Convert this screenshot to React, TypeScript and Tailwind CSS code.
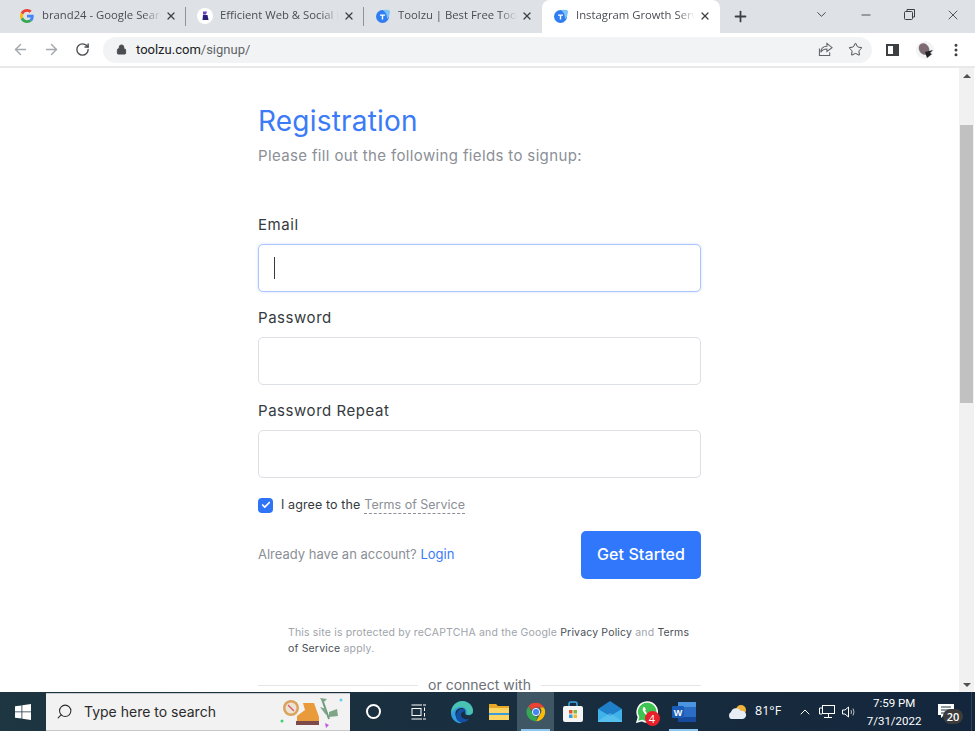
import React from 'react';
import { ArrowLeft, ArrowRight, RotateCw, Lock, Star, X, Plus, ChevronDown, Minus, MoreVertical, Search, ChevronUp, Check } from 'lucide-react';

const ToolzuIcon = () => (
  <svg width="16" height="16" viewBox="0 0 16 16" className="shrink-0">
    <circle cx="7.5" cy="8.5" r="6.5" fill="#2f7df0" />
    <path d="M8 2 Q14 1 15 3 Q15 8 12 11 Q12 5 8 2Z" fill="#7cc4f8" />
    <path d="M5 6.5H10V7.8H8.2V11.5H6.8V7.8H5Z" fill="#fff" />
  </svg>
);

const GoogleIcon = () => (
  <svg width="14" height="14" viewBox="0 0 48 48" className="shrink-0">
    <path fill="#EA4335" d="M24 9.5c3.5 0 6.700 1.200 9.200 3.600l6.900-6.900C35.900 2.400 30.500 0 24 0 14.600 0 6.500 5.400 2.600 13.200l8 6.200C12.500 13.600 17.800 9.500 24 9.500z" />
    <path fill="#4285F4" d="M47 24.500c0-1.600-.1-3.100-.4-4.500H24v9h12.900c-.6 3-2.200 5.500-4.700 7.200l7.700 6c4.500-4.200 7.100-10.300 7.100-17.700z" />
    <path fill="#FBBC05" d="M10.600 28.600c-.5-1.400-.8-3-.8-4.600s.3-3.200.8-4.600l-8-6.200C.9 16.500 0 20.100 0 24s.9 7.500 2.600 10.800l8-6.200z" />
    <path fill="#34A853" d="M24 48c6.500 0 11.900-2.100 15.900-5.800l-7.700-6c-2.200 1.500-5 2.300-8.200 2.300-6.200 0-11.500-4.100-13.400-9.900l-8 6.200C6.500 42.600 14.600 48 24 48z" />
  </svg>
);

const SocialIcon = () => (
  <div className="flex h-[16px] w-[16px] shrink-0 items-center justify-center rounded-full bg-white">
    <svg width="10" height="10" viewBox="0 0 10 10">
      <path d="M3 0.500H7L6 3.500H3Z" fill="#6d3fc4" />
      <path d="M3 4H7.500L8.500 9H2.500Z" fill="#2b1f7a" />
    </svg>
  </div>
);

const Tab = ({ icon, title, active, divider }: { icon: React.ReactNode; title: string; active?: boolean; divider?: boolean }) => (
  <div className={`relative flex h-[33px] w-[178px] shrink-0 items-center pr-[9px] pb-[2px] pl-[11px] ${active ? 'rounded-t-lg bg-white' : ''}`}>
    <div className="flex w-[16px] shrink-0 justify-center">{icon}</div>
    <span className="ml-[7px] min-w-0 flex-1 overflow-hidden text-[11.3px] whitespace-nowrap text-[#4a4d52] [mask-image:linear-gradient(to_right,black_85%,transparent)]">
      {title}
    </span>
    <X size={12} strokeWidth={2.5} className="ml-[4px] shrink-0 text-[#3c4043]" />
    {divider && <div className="absolute top-[7px] right-0 h-[19px] w-px bg-[#8f9398]" />}
  </div>
);

const BrowserChrome = () => (
  <div className="shrink-0">
    <div className="flex h-[33px] items-center bg-[#dee1e6] pl-[8px]">
      <Tab icon={<GoogleIcon />} title="brand24 - Google Search" divider />
      <Tab icon={<SocialIcon />} title="Efficient Web & Social Listening" divider />
      <Tab icon={<ToolzuIcon />} title="Toolzu | Best Free Tools" />
      <Tab icon={<ToolzuIcon />} title="Instagram Growth Services" active />
      <Plus size={17} strokeWidth={2.5} className="ml-[12px] text-[#3c4043]" />
      <div className="ml-auto flex items-center pb-[4px] text-[#3c4043]">
        <ChevronDown size={15} strokeWidth={1.5} />
        <Minus size={14} strokeWidth={1.5} className="ml-[30px]" />
        <svg width="11" height="11" viewBox="0 0 11 11" fill="none" stroke="currentColor" className="ml-[31px]">
          <rect x="0.500" y="2.500" width="8" height="8" rx="1" fill="#dee1e6" />
          <path d="M3 2.500V0.500H10.500V8H8.500" />
        </svg>
        <X size={16} strokeWidth={1.3} className="mr-[14px] ml-[30px]" />
      </div>
    </div>
    <div className="flex h-[35px] items-center border-b-2 border-[#e8e9eb] bg-white pl-[12px]">
      <ArrowLeft size={17} className="text-[#a4a7ab]" />
      <ArrowRight size={17} className="ml-[14px] text-[#a4a7ab]" />
      <RotateCw size={15} strokeWidth={2.2} className="ml-[15px] text-[#4a4d52]" />
      <div className="ml-[13px] flex h-[26px] w-[769px] shrink-0 items-center rounded-full bg-[#f1f3f4] pl-[13px]">
        <Lock size={11} fill="#4a4d52" className="text-[#4a4d52]" />
        <span className="ml-[9px] font-['Roboto',sans-serif] text-[13px] text-[#202124]">
          toolzu.com<span className="text-[#5f6368]">/signup/</span>
        </span>
        <svg width="15" height="15" viewBox="0 0 16 16" fill="none" stroke="#5f6368" strokeWidth="1.100" className="mr-[15px] ml-auto">
          <path d="M9.500 1.500L15 6L9.500 10V7.500C6 7.500 4 9 3 11C3 7 5.500 4.500 9.500 4.500Z" />
          <path d="M1.500 7V14.500H12.500V11" />
        </svg>
        <Star size={15} strokeWidth={1.6} className="mr-[9px] text-[#4a4d52]" />
      </div>
      <div className="ml-[14px] flex h-[12px] w-[13px] shrink-0 justify-end border-2 border-[#3c4043]">
        <div className="h-full w-[4px] bg-[#3c4043]" />
      </div>
      <svg width="20" height="20" viewBox="0 0 20 20" className="ml-[17px] shrink-0">
        <circle cx="9" cy="10" r="9" fill="#f1f3f4" />
        <ellipse cx="8" cy="9" rx="5" ry="6" fill="#7d6a72" transform="rotate(-30 8 9)" />
        <path d="M9 12L17 10L14 13L16 14L11 18Z" fill="#202124" />
      </svg>
      <MoreVertical size={16} strokeWidth={2.5} className="ml-[12px] shrink-0 text-[#3c4043]" />
    </div>
  </div>
);

const Field = ({ label, focused }: { label: string; focused?: boolean }) => (
  <div>
    <label className="block text-[15px] leading-[22px] tracking-[0.55px] text-[#343a40]">{label}</label>
    <div className={`mt-[8px] flex h-[48px] items-center rounded-[5px] border bg-white pl-[15px] ${focused ? 'border-[#a9c5fb] shadow-[0_0_3px_rgba(60,120,250,0.25)]' : 'border-[#dcdfe3]'}`}>
      {focused && <div className="h-[22px] w-px bg-[#343a40]" />}
    </div>
  </div>
);

const SignupForm = () => (
  <div className="mx-auto w-[443px] pt-[35px] font-['Inter',sans-serif]">
    <h1 className="text-[28px] leading-[36px] tracking-[0.2px] text-[#3b7bf8]">Registration</h1>
    <p className="mt-[5px] text-[15px] leading-[24px] tracking-[0.36px] text-[#8b8f96]">Please fill out the following fields to signup:</p>

    <div className="mt-[46px] flex flex-col gap-[15px]">
      <Field label="Email" focused />
      <Field label="Password" />
      <Field label="Password Repeat" />
    </div>

    <div className="mt-[18px] flex items-center">
      <div className="flex h-[15px] w-[15px] items-center justify-center rounded-[4px] bg-[#2f74f6]">
        <Check size={10} strokeWidth={4} className="text-white" />
      </div>
      <span className="ml-[8px] text-[12.5px] leading-[18px] tracking-[0.1px] text-[#343a40]">I agree to the</span>
      <span className="ml-[4px] border-b border-dashed border-[#8b8f96] text-[12.5px] leading-[16px] text-[#8b8f96]">Terms of Service</span>
    </div>

    <div className="mt-[17px] flex items-center justify-between">
      <p className="text-[13px] text-[#8b8f96]">
        Already have an account? <span className="text-[#3b7bf8]">Login</span>
      </p>
      <button className="h-[48px] w-[120px] rounded-[5px] bg-[#3077fb] pb-[2px] text-[16px] font-medium tracking-[0.1px] text-white">Get Started</button>
    </div>

    <p className="mt-[46px] pl-[30px] text-[10.5px] leading-[16px] tracking-[0.17px] text-[#a0a4aa]">
      This site is protected by reCAPTCHA and the Google <span className="text-[#4a4f57]">Privacy Policy</span> and <span className="text-[#4a4f57]">Terms<br />of Service</span> apply.
    </p>

    <div className="mt-[20px] flex items-center gap-[10px]">
      <div className="h-px flex-1 bg-[#e2e4e7]" />
      <span className="text-[14px] leading-[16px] text-[#6c7077]">or connect with</span>
      <div className="h-px flex-1 bg-[#e2e4e7]" />
    </div>
  </div>
);

const Scrollbar = () => (
  <div className="mr-px flex w-[15px] shrink-0 flex-col items-center bg-[#f1f1f1]">
    <div className="flex h-[15px] items-center justify-center">
      <div className="h-0 w-0 border-x-[4px] border-b-[4px] border-x-transparent border-b-[#505050]" />
    </div>
    <div className="mt-[42px] h-[278px] w-[13px] bg-[#c1c1c1]" />
    <div className="mt-auto flex h-[15px] items-center justify-center">
      <div className="h-0 w-0 border-x-[4px] border-t-[4px] border-x-transparent border-t-[#505050]" />
    </div>
  </div>
);

const TaskIcon = ({ children, active, running }: { children: React.ReactNode; active?: boolean; running?: boolean }) => (
  <div className={`relative flex h-[39px] w-[37px] shrink-0 items-center justify-center ${active ? 'bg-[#3f5664]' : ''}`}>
    {children}
    {running && <div className="absolute right-[4px] bottom-0 left-[4px] h-[2px] bg-[#8ec5ee]" />}
  </div>
);

const Taskbar = () => (
  <div className="flex h-[39px] shrink-0 items-center bg-gradient-to-r from-[#1e3641] to-[#14263c] font-['Open_Sans',sans-serif] text-white">
    <div className="flex w-[46px] shrink-0 justify-center">
      <svg width="16" height="16" viewBox="0 0 16 16" fill="#fff">
        <path d="M0 2.300L6.500 1.400V7.500H0ZM7.300 1.300L16 0V7.500H7.300ZM0 8.300H6.500V14.600L0 13.700ZM7.300 8.300H16V16L7.300 14.700Z" />
      </svg>
    </div>
    <div className="flex h-[38px] w-[304px] shrink-0 items-center border-y border-[#c9c9c9] bg-[#f2f2f2] pl-[10px] text-[#2b2b2b]">
      <Search size={17} strokeWidth={1.5} className="-scale-x-100" />
      <span className="ml-[11px] font-['Inter',sans-serif] text-[14px]">Type here to search</span>
      <svg width="66" height="34" viewBox="0 0 66 34" className="mr-[5px] ml-auto">
        <circle cx="12" cy="13" r="8" fill="#d9a35b" />
        <circle cx="12" cy="13" r="5.500" fill="#ece3d3" />
        <path d="M9 10L15 16" stroke="#d8607a" strokeWidth="1.500" />
        <circle cx="3" cy="26" r="1.500" fill="#3ecf6f" />
        <path d="M35 8H24L26 15L18 21V29H40V22Z" fill="#e99a3a" />
        <path d="M17 26H40V30H17Z" fill="#7d4a4a" />
        <path d="M43 4L50 24" stroke="#6f9b7a" strokeWidth="2" fill="none" />
        <path d="M44 8L41 3L48 4ZM47 14L41 12L47 20ZM50 17L58 14L59 21L50 22Z" fill="#7fa588" />
        <path d="M46 28L50 30L47 33Z" fill="#c05ce0" />
        <circle cx="62" cy="5" r="1.500" fill="#5fd0f0" />
      </svg>
    </div>
    <div className="flex w-[46px] shrink-0 justify-center">
      <div className="h-[15px] w-[15px] rounded-full border-[2.5px] border-white" />
    </div>
    <div className="flex w-[46px] shrink-0 justify-center">
      <svg width="16" height="16" viewBox="0 0 16 16" fill="none" stroke="#fff">
        <path d="M0.500 1H11M0.500 15H11M12 1H15M13.500 3.500V7M13.500 9V12.500M12 15H15" />
        <rect x="1" y="4.500" width="9" height="7" />
      </svg>
    </div>
    <div className="flex shrink-0 items-center pl-[1px]">
      <TaskIcon>
        <svg width="24" height="24" viewBox="0 0 24 24">
          <path d="M1 13C1 5 7 1 12.500 1C19 1 23.500 6 23 12C23 14.500 20 15.500 17 15C14 14.500 16 12 15 10C13.500 7 8 7.500 6 11C4 15 7 21 12 23C6 24 1 19 1 13Z" fill="#2f9fe0" />
          <path d="M7 20C5 15 7 10 11 9C14 8.500 15 10 15.500 11C14 11 11 12 11 15C11 18 15 20 19 19C16 23 10 23.500 7 20Z" fill="#1450a8" />
          <path d="M12 1C18 1 23.500 6 23 12C22 14.500 19 15 17 14.500C18 10 15 6 9 7C5 8 2 11 1 14C1 6 7 1 12 1Z" fill="#5edb8f" opacity="0.6" />
        </svg>
      </TaskIcon>
      <TaskIcon>
        <svg width="22" height="20" viewBox="0 0 22 20">
          <path d="M1 2H8L10 4H21V8H1Z" fill="#e8a825" />
          <path d="M1 6H21V18H1Z" fill="#fcd462" />
          <path d="M1 11H21V13H1Z" fill="#3a9bdc" />
        </svg>
      </TaskIcon>
      <TaskIcon active running>
        <svg width="22" height="22" viewBox="0 0 48 48">
          <path fill="#EA4335" d="M24 4a20 20 0 0 1 17.300 10H24a10 10 0 0 0-9.500 6.900L7.700 11.500A20 20 0 0 1 24 4z" />
          <path fill="#FBBC05" d="M41.300 14A20 20 0 0 1 24 44l8.700-15a10 10 0 0 0-.5-15z" />
          <path fill="#34A853" d="M24 44A20 20 0 0 1 7.700 11.500L15 24a10 10 0 0 0 12 9.500z" />
          <circle cx="24" cy="24" r="8" fill="#4285F4" stroke="#fff" strokeWidth="2" />
        </svg>
      </TaskIcon>
      <TaskIcon>
        <svg width="22" height="22" viewBox="0 0 22 22">
          <path d="M7 6V3Q7 1 9 1H13Q15 1 15 3V6" fill="none" stroke="#3aa6e8" strokeWidth="1.500" />
          <rect x="1" y="5" width="20" height="16" rx="2" fill="#f4f4f4" />
          <rect x="7" y="9" width="3.500" height="3.500" fill="#e8552d" />
          <rect x="11.500" y="9" width="3.500" height="3.500" fill="#7fba3a" />
          <rect x="7" y="13.500" width="3.500" height="3.500" fill="#2f9fe0" />
          <rect x="11.500" y="13.500" width="3.500" height="3.500" fill="#f7b92d" />
        </svg>
      </TaskIcon>
      <TaskIcon>
        <svg width="24" height="22" viewBox="0 0 24 22">
          <path d="M12 0L24 8V20H0V8Z" fill="#1f7fc8" />
          <path d="M0 8L12 15L24 8V21H0Z" fill="#3fb2ea" />
          <path d="M0 20L12 12L24 20V21H0Z" fill="#6ccdf2" opacity="0.5" />
        </svg>
      </TaskIcon>
      <TaskIcon>
        <div className="relative">
          <svg width="22" height="22" viewBox="0 0 22 22">
            <path d="M11 1A10 10 0 0 0 2.500 16L1 21L6 19.500A10 10 0 1 0 11 1Z" fill="#3fc351" stroke="#fff" strokeWidth="1.500" />
            <path d="M7.500 6Q6 7.500 7 10Q9 14 13.500 15.500Q16 15.500 16 13.500L13.500 12L12.500 13Q10 12 9 9.500L10 8.500L8.500 6Z" fill="#fff" />
          </svg>
          <div className="absolute -right-[2px] -bottom-[3px] flex h-[15px] w-[15px] items-center justify-center rounded-full bg-[#e8202a] text-[11px] leading-none text-white">4</div>
        </div>
      </TaskIcon>
      <TaskIcon running>
        <svg width="24" height="22" viewBox="0 0 24 22">
          <rect x="6" y="1" width="18" height="20" rx="1" fill="#2b6cc4" />
          <rect x="6" y="1" width="18" height="5" fill="#4a94e0" />
          <rect x="6" y="16" width="18" height="5" fill="#154a9c" />
          <rect x="0" y="5" width="12" height="12" rx="1" fill="#1a5cb8" />
          <text x="6" y="14.500" textAnchor="middle" fontSize="9" fontWeight="700" fill="#fff" fontFamily="Liberation Sans">W</text>
        </svg>
      </TaskIcon>
    </div>
    <svg width="22" height="16" viewBox="0 0 22 16" className="ml-[24px] shrink-0">
      <circle cx="15" cy="6" r="5" fill="#f0b43c" />
      <path d="M5 15A4 4 0 0 1 5 8A5.500 5.500 0 0 1 15 7A4 4 0 0 1 17 15Z" fill="#e6edf4" />
    </svg>
    <span className="ml-[7px] text-[12.5px]">81°F</span>
    <ChevronUp size={16} strokeWidth={1.5} className="ml-[16px]" />
    <svg width="16" height="14" viewBox="0 0 16 14" fill="none" stroke="#fff" className="ml-[6px]">
      <rect x="3.500" y="0.500" width="12" height="8" />
      <path d="M9.500 8.500V12M5 12.500H13M0.500 3H3M0.500 3V9H3" />
    </svg>
    <svg width="15" height="14" viewBox="0 0 15 14" fill="none" stroke="#fff" className="ml-[7px]">
      <path d="M0.500 5V9H3L6.500 12V2L3 5Z" />
      <path d="M9 5Q10 7 9 9M11 3.500Q13 7 11 10.500" opacity="0.7" />
    </svg>
    <div className="ml-[6px] flex w-[62px] flex-col items-center font-['Roboto',sans-serif] text-[11.5px] leading-[18px]">
      <span>7:59 PM</span>
      <span>7/31/2022</span>
    </div>
    <div className="relative ml-[13px]">
      <svg width="16" height="15" viewBox="0 0 16 15">
        <path d="M0 0H16V11H6L3 14V11H0Z" fill="#fff" />
        <path d="M3 3H13M3 6H13M3 9H10" stroke="#1c3340" />
      </svg>
      <div className="absolute top-[5px] left-[5px] flex h-[15px] w-[20px] items-center justify-center rounded-full bg-[#3c3c3c] text-[11px] leading-none font-semibold text-white">20</div>
    </div>
    <div className="mr-[3px] ml-auto h-full w-px bg-[#2c4358]" />
  </div>
);

export default function App() {
  return (
    <div className="flex h-[731px] w-[975px] flex-col overflow-hidden bg-white font-['Open_Sans',sans-serif]">
      <BrowserChrome />
      <div className="flex min-h-0 flex-1">
        <div className="flex-1 overflow-hidden">
          <SignupForm />
        </div>
        <Scrollbar />
      </div>
      <Taskbar />
    </div>
  );
}
